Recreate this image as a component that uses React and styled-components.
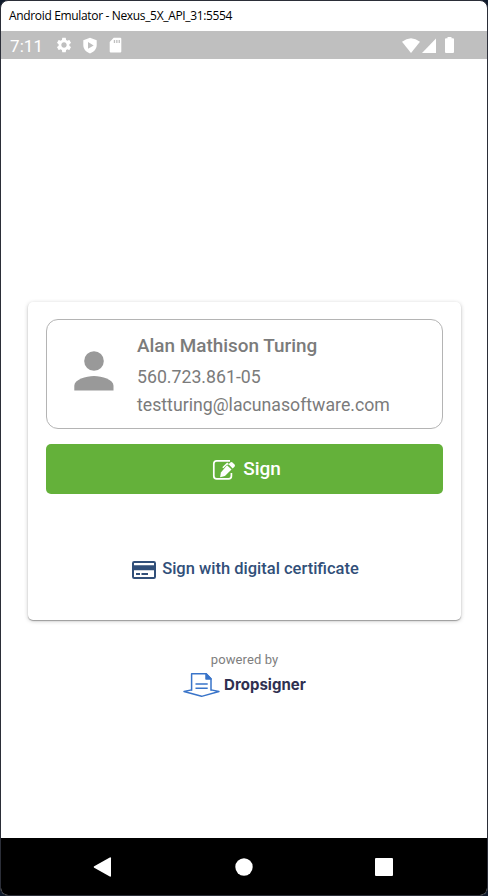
import React from "react";
import styled, { createGlobalStyle } from "styled-components";

const GlobalStyle = createGlobalStyle`
  * { box-sizing: border-box; }
  body { margin: 0; background: #101b2c; font-family: Roboto, "Liberation Sans", sans-serif; }
  svg { display: block; flex: none; }
`;

const Window = styled.div`
  width: 488px;
  height: 896px;
  display: flex;
  flex-direction: column;
  overflow: hidden;
  background: #fff;
  border: 1px solid #2b2e38;
  border-radius: 8px;
`;

const TitleBar = styled.header`
  height: 30px;
  flex: none;
  padding-left: 8px;
  font: 400 12px/30px "Open Sans", "Noto Sans", sans-serif;
  letter-spacing: -0.34px;
  color: #000;
  white-space: nowrap;
`;

const StatusBar = styled.div`
  height: 28px;
  flex: none;
  display: flex;
  align-items: center;
  padding: 0 33px 0 9px;
  background: #bfbfbf;
  color: #fff;
`;

const Clock = styled.span`
  width: 45px;
  font-size: 17px;
  line-height: 28px;
  padding-top: 2px;
  letter-spacing: 0.1px;
`;

const StatusIcons = styled.div`
  display: flex;
  align-items: center;
  gap: ${(p) => p.$gap}px;
  margin-left: ${(p) => (p.$end ? "auto" : 0)};
`;

const Screen = styled.main`
  flex: 1;
  display: flex;
  flex-direction: column;
  align-items: center;
  padding-top: 243px;
`;

const Card = styled.section`
  width: 433px;
  height: 318px;
  padding: 17px 18px;
  margin-left: 1px;
  background: #fff;
  border-radius: 5px;
  box-shadow: 0 1px 1px rgba(0, 0, 0, 0.3), 0 1px 4px rgba(0, 0, 0, 0.22);
`;

const Identity = styled.div`
  height: 110px;
  display: flex;
  border: 1px solid #b4b4b4;
  border-radius: 12px;
  padding: 12px 0 0 27px;
  gap: 23px;
  color: #7b7b7b;
`;

const Avatar = styled.div`
  padding-top: 19px;
`;

const Details = styled.div`
  font-size: 17.72px;
  line-height: 28px;
  white-space: nowrap;
`;

const Name = styled.div`
  font-weight: 500;
  font-size: 18.9px;
  height: 31px;
`;

const Detail = styled.div`
  height: 28px;
`;

const SignButton = styled.button`
  width: 100%;
  height: 50px;
  margin-top: 15px;
  padding: 0 0 1px 4px;
  border: 0;
  border-radius: 5px;
  background: #64b13a;
  color: #fff;
  display: flex;
  align-items: center;
  justify-content: center;
  gap: 7px;
  font: 500 19px/24px Roboto, sans-serif;
`;

const CertificateLink = styled.a`
  margin-top: 63px;
  height: 24px;
  display: flex;
  align-items: center;
  justify-content: center;
  gap: 6px;
  padding-left: 2px;
  color: #314f79;
  font: 500 16.5px/24px Roboto, sans-serif;
  white-space: nowrap;
`;

const IconNudge = styled.span`
  padding-top: ${(p) => p.$top || 0}px;
  padding-left: ${(p) => p.$left || 0}px;
`;

const Footer = styled.footer`
  margin-top: 31px;
  padding-left: 1px;
  display: flex;
  flex-direction: column;
  align-items: center;
  color: #7e7e7e;
  font-size: 13px;
  line-height: 18px;
  letter-spacing: 0.1px;
`;

const Brand = styled.div`
  display: flex;
  gap: 4px;
  margin-top: 4px;
`;

const BrandName = styled.span`
  color: #2f3050;
  font: 700 15px/23px Inter, sans-serif;
  letter-spacing: 0.04px;
`;

const NavBar = styled.nav`
  height: 57px;
  flex: none;
  display: flex;
  align-items: center;
  justify-content: space-between;
  padding: 0 94px 0 92px;
  background: #000;
`;

const Gear = () => (
  <svg width="18" height="18" viewBox="0 0 24 24" fill="currentColor">
    <path d="M19.14 12.94c.04-.3.06-.61.06-.94 0-.32-.02-.64-.07-.94l2.03-1.58c.18-.14.23-.41.12-.61l-1.92-3.32c-.12-.22-.37-.29-.59-.22l-2.39.96c-.5-.38-1.03-.7-1.62-.94l-.36-2.54c-.04-.24-.24-.41-.48-.41h-3.84c-.24 0-.43.17-.47.41l-.36 2.54c-.59.24-1.13.57-1.62.94l-2.39-.96c-.22-.08-.47 0-.59.22L2.74 8.87c-.12.21-.08.47.12.61l2.03 1.58c-.05.3-.09.63-.09.94s.02.64.07.94l-2.03 1.58c-.18.14-.23.41-.12.61l1.92 3.32c.12.22.37.29.59.22l2.39-.96c.5.38 1.03.7 1.62.94l.36 2.54c.05.24.24.41.48.41h3.84c.24 0 .44-.17.47-.41l.36-2.54c.59-.24 1.13-.56 1.62-.94l2.39.96c.22.08.47 0 .59-.22l1.92-3.32c.12-.22.07-.47-.12-.61l-2.01-1.58zM12 15.6c-1.98 0-3.6-1.62-3.6-3.6s1.62-3.6 3.6-3.6 3.6 1.62 3.6 3.6-1.62 3.6-3.6 3.6z" />
  </svg>
);

const Shield = () => (
  <svg width="14" height="17" viewBox="0 0 14 17" fillRule="evenodd" fill="currentColor">
    <path d="M7 .8L13.7 3.3V8c0 4.1-2.7 6.8-6.7 8.5C3 14.8.3 12.1.3 8V3.3zM5 5v6.8l5.7-3.4z" />
  </svg>
);

const SdCard = () => (
  <svg width="13" height="16" viewBox="0 0 13 16" fillRule="evenodd" fill="currentColor">
    <path d="M4.7.7h6.6q1 0 1 1v12.8q0 1-1 1H1.7q-1 0-1-1V4.9zM4.8 3v3h1.3V3zM7.2 3v3h1.3V3zM9.6 3v3h1.3V3z" />
  </svg>
);

const Wifi = () => (
  <svg width="18" height="15" viewBox="0 0 18 15" fill="currentColor">
    <path d="M0 3.8Q9-3.4 18 3.8L9 15z" />
  </svg>
);

const Signal = () => (
  <svg width="14" height="15" viewBox="0 0 14 15" fill="currentColor">
    <path d="M14 .5V15H0z" />
  </svg>
);

const Battery = () => (
  <svg width="9" height="16" viewBox="0 0 9 16" fill="currentColor">
    <path d="M2.5 0h4v1.3H8q1 0 1 1V15q0 1-1 1H1q-1 0-1-1V2.3q0-1 1-1h1.5z" />
  </svg>
);

const Person = () => (
  <svg width="40" height="40" viewBox="0 0 40 40" fill="#999">
    <circle cx="20" cy="10" r="9.8" />
    <path d="M.3 39.6v-4.8C.3 28.4 12 25 20 25s19.5 3.4 19.5 9.8v4.8z" />
  </svg>
);

const SignIcon = () => (
  <svg width="24" height="22" viewBox="0 0 24 22" fill="none">
    <path d="M18 1.8H4.7Q1.8 1.8 1.8 4.7v12.2q0 2.9 2.9 2.9h11.8q2.9 0 2.9-2.9v-3" stroke="#fff" strokeWidth="1.7" />
    <path d="M15 6.2l4.5 4.3-6.6 6.6-4.8 1.2.8-4.9z" fill="#fff" />
    <path d="M18.3 3.5q1.1-1 2.2 0l2 2q1 1.1 0 2.2l-1.8 1.8-4.2-4.2z" fill="#fff" />
    <path d="M10.8 8.8l4.4-4.3 1.2 1" stroke="#fff" strokeWidth="1.5" />
  </svg>
);

const CardIcon = () => (
  <svg width="24" height="18" viewBox="0 0 24 18" fill="none">
    <rect x="1" y="1" width="22" height="16" rx="1.2" stroke="currentColor" strokeWidth="2" />
    <path d="M1 4.2h22v5H1zM4 12h4v2H4zM9.5 12h6.5v2H9.5z" fill="currentColor" />
  </svg>
);

const DropsignerLogo = () => (
  <svg width="37" height="24" viewBox="0 0 37 24" fill="none" stroke="#3974c9" strokeWidth="1.5" strokeLinejoin="round">
    <path d="M8.6 17.7V.8h14.6L28 5.8v11.9" />
    <path d="M23 .8v5.2h5z" fill="#3974c9" />
    <path d="M12.5 11h12.2M12.5 15.3h12.2" />
    <path d="M8.6 16.9L1 18.5l17.6 4.8L36 18.5l-8-1.6" strokeWidth="1.4" />
  </svg>
);

const BackIcon = () => (
  <svg width="19" height="20" viewBox="0 0 19 20" fill="#fff">
    <path d="M1.2 9.2L16.8.5q1.2-.5 1.2.8v17.4q0 1.3-1.2.8L1.2 10.8Q0 10 1.2 9.2z" />
  </svg>
);

const HomeIcon = () => (
  <svg width="18" height="18" viewBox="0 0 18 18" fill="#fff">
    <circle cx="9" cy="9" r="8.7" />
  </svg>
);

const RecentIcon = () => (
  <svg width="18" height="18" viewBox="0 0 18 18" fill="#fff">
    <rect width="18" height="18" rx="1" />
  </svg>
);

export default function App() {
  return (
    <>
      <GlobalStyle />
      <Window>
        <TitleBar>Android Emulator - Nexus_5X_API_31:5554</TitleBar>
        <StatusBar>
          <Clock>7:11</Clock>
          <StatusIcons $gap={10}>
            <Gear />
            <Shield />
            <IconNudge $left={2}>
              <SdCard />
            </IconNudge>
          </StatusIcons>
          <StatusIcons $gap={2} $end>
            <Wifi />
            <Signal />
            <IconNudge $left={7}>
              <Battery />
            </IconNudge>
          </StatusIcons>
        </StatusBar>
        <Screen>
          <Card>
            <Identity>
              <Avatar>
                <Person />
              </Avatar>
              <Details>
                <Name>Alan Mathison Turing</Name>
                <Detail>560.723.861-05</Detail>
                <Detail>testturing@lacunasoftware.com</Detail>
              </Details>
            </Identity>
            <SignButton>
              <IconNudge $top={2}>
                <SignIcon />
              </IconNudge>
              Sign
            </SignButton>
            <CertificateLink>
              <IconNudge $top={2}>
                <CardIcon />
              </IconNudge>
              Sign with digital certificate
            </CertificateLink>
          </Card>
          <Footer>
            powered by
            <Brand>
              <DropsignerLogo />
              <BrandName>Dropsigner</BrandName>
            </Brand>
          </Footer>
        </Screen>
        <NavBar>
          <BackIcon />
          <HomeIcon />
          <RecentIcon />
        </NavBar>
      </Window>
    </>
  );
}
